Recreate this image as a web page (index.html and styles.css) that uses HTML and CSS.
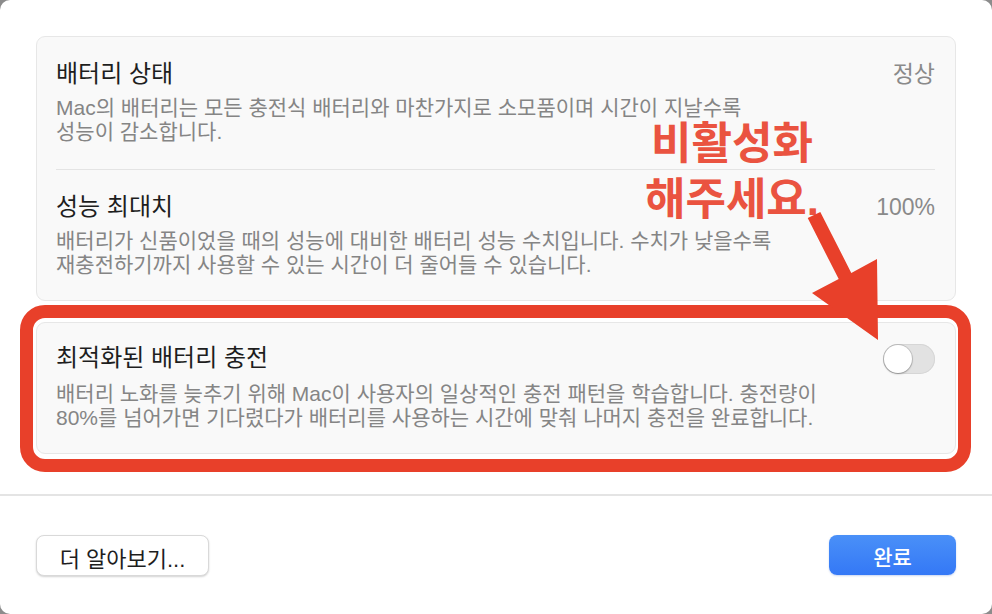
FILE: index.html
```html
<!DOCTYPE html>
<html lang="ko">
<head>
<meta charset="utf-8">
<title>배터리</title>
<link rel="stylesheet" href="styles.css">
</head>
<body>
<div class="window">
  <div class="content">
    <div class="card">
      <div class="row row1">
        <div class="text">
          <div class="title">배터리 상태</div>
          <div class="desc">Mac의 배터리는 모든 충전식 배터리와 마찬가지로 소모품이며 시간이 지날수록<br>성능이 감소합니다.</div>
        </div>
        <div class="value">정상</div>
      </div>
      <div class="divider"></div>
      <div class="row row2">
        <div class="text">
          <div class="title">성능 최대치</div>
          <div class="desc">배터리가 신품이었을 때의 성능에 대비한 배터리 성능 수치입니다. 수치가 낮을수록<br>재충전하기까지 사용할 수 있는 시간이 더 줄어들 수 있습니다.</div>
        </div>
        <div class="value">100%</div>
      </div>
    </div>
    <div class="card card2">
      <div class="row">
        <div class="text">
          <div class="title">최적화된 배터리 충전</div>
          <div class="desc">배터리 노화를 늦추기 위해 Mac이 사용자의 일상적인 충전 패턴을 학습합니다. 충전량이<br>80%를 넘어가면 기다렸다가 배터리를 사용하는 시간에 맞춰 나머지 충전을 완료합니다.</div>
        </div>
        <div class="toggle"><div class="knob"></div></div>
      </div>
    </div>
  </div>
  <div class="sep"></div>
  <div class="footer">
    <button class="btn">더 알아보기...</button>
    <button class="btn primary">완료</button>
  </div>

  <div class="mark-box"></div>
  <div class="mark-text">비활성화<br>해주세요.</div>
  <svg class="arrow" width="992" height="614" viewBox="0 0 992 614">
    <polygon points="807.7,218.1 820.3,211.9 851.3,272.9 877,259 878,340 812,293 838.7,279.1" fill="#e8402a"/>
  </svg>
</div>
</body>
</html>
```
FILE: styles.css
```css
* { box-sizing: border-box; }
html, body {
  margin: 0;
  padding: 0;
  background: #8c8c8c;
}
body {
  font-family: "Liberation Sans", "Noto Sans CJK KR", sans-serif;
}
.window {
  position: relative;
  width: 992px;
  height: 614px;
  background: #ffffff;
  border-radius: 10px;
  overflow: hidden;
}
.content {
  padding: 36px 36px 40px;
}
.card {
  background: #f9f9f9;
  border: 1px solid #e7e7e7;
  border-radius: 9px;
  padding: 0 20px 0 19px;
}
.card2 {
  margin-top: 21px;
}
.row {
  display: flex;
  justify-content: space-between;
  align-items: flex-start;
}
.row1 {
  padding: 23px 0 25px;
}
.row2 {
  padding: 23px 0 23px;
}
.card2 .row {
  padding: 21px 0 23px;
}
.card2 .desc {
  margin-top: 10px;
}
.title {
  font-size: 24px;
  line-height: 28px;
  color: #1e1e1e;
}
.desc {
  margin-top: 8px;
  font-size: 21px;
  line-height: 24px;
  color: #858585;
}
.value {
  font-size: 23px;
  line-height: 28px;
  color: #8a8a8a;
}
.divider {
  height: 1px;
  background: #e4e4e4;
}
.toggle {
  margin-top: 0;
  width: 52px;
  height: 30px;
  border-radius: 15px;
  background: #e2e2e2;
  box-shadow: inset 0 0 0 1px #d6d6d6;
  position: relative;
}
.knob {
  position: absolute;
  left: 1px;
  top: 1px;
  width: 28px;
  height: 28px;
  border-radius: 50%;
  background: #ffffff;
  box-shadow: 0 0 0 1px rgba(0,0,0,0.12), 0 1px 2px rgba(0,0,0,0.25);
}
.sep {
  height: 2px;
  background: #e4e4e4;
}
.footer {
  display: flex;
  justify-content: space-between;
  padding: 39px 36px 0;
}
.btn {
  width: 173px;
  height: 41px;
  padding: 2px 0 0;
  font-family: "Liberation Sans", "Noto Sans CJK KR", sans-serif;
  font-size: 22px;
  color: #1e1e1e;
  background: #ffffff;
  border: 1px solid #d9d9d9;
  border-radius: 8px;
  box-shadow: 0 1px 2px rgba(0,0,0,0.18);
}
.btn.primary {
  width: 127px;
  height: 40px;
  color: #ffffff;
  font-size: 21px;
  font-weight: 500;
  border: none;
  background: linear-gradient(#4a90f8, #3478f6);
  box-shadow: 0 1px 2px rgba(40,90,200,0.25);
}
.mark-box {
  position: absolute;
  left: 20px;
  top: 305px;
  width: 951px;
  height: 167px;
  border: 13px solid #e8402a;
  border-radius: 25px;
}
.mark-text {
  position: absolute;
  left: 622px;
  top: 116px;
  width: 220px;
  text-align: center;
  font-size: 44px;
  line-height: 56px;
  font-weight: 700;
  color: #ea5340;
}
.arrow {
  position: absolute;
  left: 0;
  top: 0;
}
```
